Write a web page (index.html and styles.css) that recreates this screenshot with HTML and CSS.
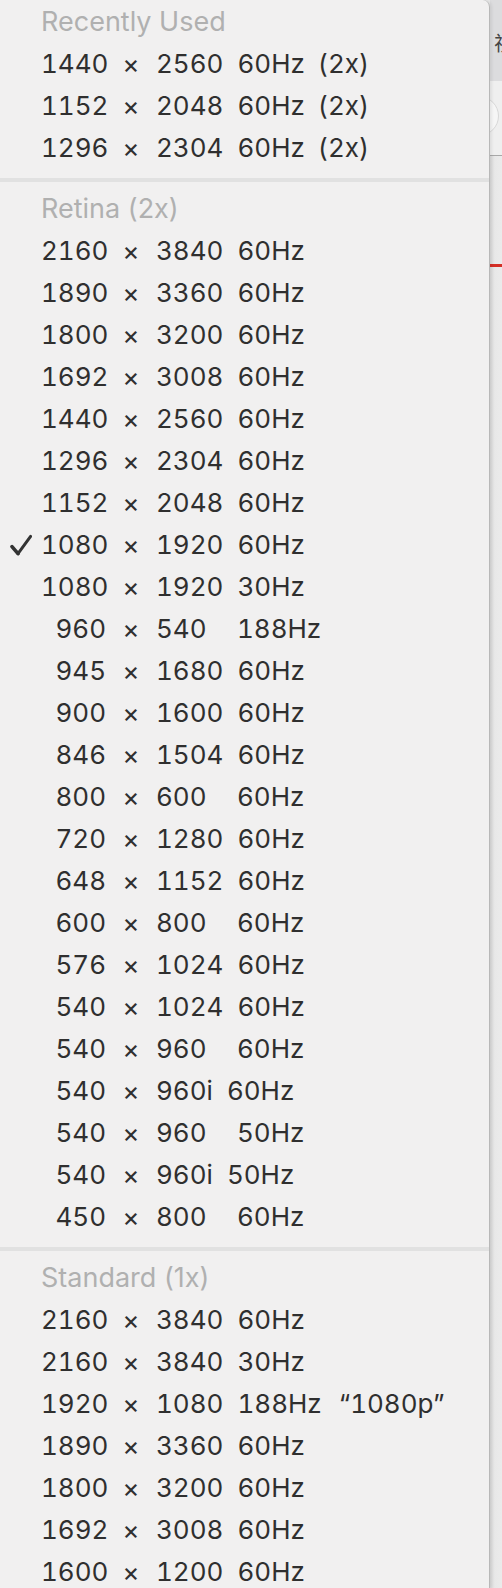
FILE: index.html
```html
<!DOCTYPE html>
<html lang="en">
<head>
<meta charset="utf-8">
<title>Display resolutions</title>
<link rel="stylesheet" href="styles.css">
</head>
<body>
<div class="screen">
  <div class="menu">
    <div class="title">Recently Used</div>
    <div class="item"><span class="mark"></span><span class="w">1440</span><span class="x">×</span><span class="h">2560</span><span class="hz">60Hz</span><span class="extra">(2x)</span></div>
    <div class="item"><span class="mark"></span><span class="w">1152</span><span class="x">×</span><span class="h">2048</span><span class="hz">60Hz</span><span class="extra">(2x)</span></div>
    <div class="item"><span class="mark"></span><span class="w">1296</span><span class="x">×</span><span class="h">2304</span><span class="hz">60Hz</span><span class="extra">(2x)</span></div>
    <div class="sep"></div>

    <div class="title">Retina (2x)</div>
    <div class="item"><span class="mark"></span><span class="w">2160</span><span class="x">×</span><span class="h">3840</span><span class="hz">60Hz</span></div>
    <div class="item"><span class="mark"></span><span class="w">1890</span><span class="x">×</span><span class="h">3360</span><span class="hz">60Hz</span></div>
    <div class="item"><span class="mark"></span><span class="w">1800</span><span class="x">×</span><span class="h">3200</span><span class="hz">60Hz</span></div>
    <div class="item"><span class="mark"></span><span class="w">1692</span><span class="x">×</span><span class="h">3008</span><span class="hz">60Hz</span></div>
    <div class="item"><span class="mark"></span><span class="w">1440</span><span class="x">×</span><span class="h">2560</span><span class="hz">60Hz</span></div>
    <div class="item"><span class="mark"></span><span class="w">1296</span><span class="x">×</span><span class="h">2304</span><span class="hz">60Hz</span></div>
    <div class="item"><span class="mark"></span><span class="w">1152</span><span class="x">×</span><span class="h">2048</span><span class="hz">60Hz</span></div>
    <div class="item"><span class="mark"><svg class="check" viewBox="0 0 22 22" width="22" height="22"><path d="M2 12.6 L8 19.6" stroke="#333" stroke-width="3.6" stroke-linecap="round" fill="none"/><path d="M8 19.6 L20.6 2.4" stroke="#333" stroke-width="3" stroke-linecap="round" fill="none"/></svg></span><span class="w">1080</span><span class="x">×</span><span class="h">1920</span><span class="hz">60Hz</span></div>
    <div class="item"><span class="mark"></span><span class="w">1080</span><span class="x">×</span><span class="h">1920</span><span class="hz">30Hz</span></div>
    <div class="item"><span class="mark"></span><span class="w">960</span><span class="x">×</span><span class="h">540<span class="fig"></span></span><span class="hz">188Hz</span></div>
    <div class="item"><span class="mark"></span><span class="w">945</span><span class="x">×</span><span class="h">1680</span><span class="hz">60Hz</span></div>
    <div class="item"><span class="mark"></span><span class="w">900</span><span class="x">×</span><span class="h">1600</span><span class="hz">60Hz</span></div>
    <div class="item"><span class="mark"></span><span class="w">846</span><span class="x">×</span><span class="h">1504</span><span class="hz">60Hz</span></div>
    <div class="item"><span class="mark"></span><span class="w">800</span><span class="x">×</span><span class="h">600<span class="fig"></span></span><span class="hz">60Hz</span></div>
    <div class="item"><span class="mark"></span><span class="w">720</span><span class="x">×</span><span class="h">1280</span><span class="hz">60Hz</span></div>
    <div class="item"><span class="mark"></span><span class="w">648</span><span class="x">×</span><span class="h">1152</span><span class="hz">60Hz</span></div>
    <div class="item"><span class="mark"></span><span class="w">600</span><span class="x">×</span><span class="h">800<span class="fig"></span></span><span class="hz">60Hz</span></div>
    <div class="item"><span class="mark"></span><span class="w">576</span><span class="x">×</span><span class="h">1024</span><span class="hz">60Hz</span></div>
    <div class="item"><span class="mark"></span><span class="w">540</span><span class="x">×</span><span class="h">1024</span><span class="hz">60Hz</span></div>
    <div class="item"><span class="mark"></span><span class="w">540</span><span class="x">×</span><span class="h">960<span class="fig"></span></span><span class="hz">60Hz</span></div>
    <div class="item"><span class="mark"></span><span class="w">540</span><span class="x">×</span><span class="h">960i</span><span class="hz">60Hz</span></div>
    <div class="item"><span class="mark"></span><span class="w">540</span><span class="x">×</span><span class="h">960<span class="fig"></span></span><span class="hz">50Hz</span></div>
    <div class="item"><span class="mark"></span><span class="w">540</span><span class="x">×</span><span class="h">960i</span><span class="hz">50Hz</span></div>
    <div class="item"><span class="mark"></span><span class="w">450</span><span class="x">×</span><span class="h">800<span class="fig"></span></span><span class="hz">60Hz</span></div>
    <div class="sep"></div>

    <div class="title">Standard (1x)</div>
    <div class="item"><span class="mark"></span><span class="w">2160</span><span class="x">×</span><span class="h">3840</span><span class="hz">60Hz</span></div>
    <div class="item"><span class="mark"></span><span class="w">2160</span><span class="x">×</span><span class="h">3840</span><span class="hz">30Hz</span></div>
    <div class="item"><span class="mark"></span><span class="w">1920</span><span class="x">×</span><span class="h">1080</span><span class="hz">188Hz</span><span class="extra quote">“1080p”</span></div>
    <div class="item"><span class="mark"></span><span class="w">1890</span><span class="x">×</span><span class="h">3360</span><span class="hz">60Hz</span></div>
    <div class="item"><span class="mark"></span><span class="w">1800</span><span class="x">×</span><span class="h">3200</span><span class="hz">60Hz</span></div>
    <div class="item"><span class="mark"></span><span class="w">1692</span><span class="x">×</span><span class="h">3008</span><span class="hz">60Hz</span></div>
    <div class="item"><span class="mark"></span><span class="w">1600</span><span class="x">×</span><span class="h">1200</span><span class="hz">60Hz</span></div>
  </div>

  <div class="backdrop">
    <div class="bd-toolbar"><span class="bd-glyph">视</span></div>
    <div class="bd-band"><span class="bd-circle"></span></div>
    <div class="bd-body"><div class="bd-red"></div></div>
  </div>
</div>
</body>
</html>
```

FILE: styles.css
```css
html, body {
  margin: 0;
  padding: 0;
}

body {
  background: #e8e8e8;
  font-family: Inter, "Noto Sans", "Liberation Sans", sans-serif;
}

.screen {
  display: flex;
  width: 502px;
  height: 1588px;
  overflow: hidden;
}

.menu {
  flex: none;
  width: 489px;
  padding-top: 2px;
  background: #f1f0f0;
  border-right: 1px solid #b8b8b8;
  border-top-right-radius: 7px;
  box-shadow: 2px 0 3px rgba(0, 0, 0, 0.07);
  position: relative;
  z-index: 1;
}

.title {
  height: 40px;
  line-height: 40px;
  padding-left: 41px;
  font-size: 27px;
  color: #b0b0b0;
  white-space: nowrap;
}

.item {
  display: flex;
  align-items: center;
  height: 42px;
  font-size: 26px;
  color: #2f2f2f;
  font-feature-settings: "tnum";
  white-space: nowrap;
}

.mark {
  flex: none;
  width: 41px;
  height: 42px;
  display: flex;
  align-items: center;
  padding-left: 10px;
  box-sizing: border-box;
}

.check {
  display: block;
  margin-top: 1px;
}

.w {
  flex: none;
  width: 65px;
  text-align: right;
}

.x {
  flex: none;
  width: 50px;
  text-align: center;
}

.h {
  flex: none;
}

.fig {
  display: inline-block;
  width: 1ch;
}

.hz {
  margin-left: 14px;
}

.extra {
  margin-left: 13px;
}

.quote {
  margin-left: 17px;
}

.sep {
  height: 21px;
  box-sizing: border-box;
  padding-top: 10px;
}

.sep::before {
  content: "";
  display: block;
  height: 4px;
  background: #e1e1e1;
}

.backdrop {
  flex: 1;
  display: flex;
  flex-direction: column;
  overflow: hidden;
}

.bd-toolbar {
  height: 81px;
  flex: none;
  background: #dcdcde;
  display: flex;
  align-items: center;
  padding-top: 4px;
  box-sizing: border-box;
}

.bd-glyph {
  font-family: "Noto Sans CJK SC", sans-serif;
  font-size: 20px;
  color: #444;
  margin-left: 4px;
  white-space: nowrap;
}

.bd-band {
  height: 74px;
  flex: none;
  background: #efefef;
  border-bottom: 1px solid #a8a8a8;
  display: flex;
  align-items: center;
}

.bd-circle {
  flex: none;
  width: 38px;
  height: 38px;
  margin-left: -31px;
  border-radius: 50%;
  background: #f6f6f6;
  border: 1px solid #d8d8d8;
  margin-top: -4px;
}

.bd-body {
  flex: 1;
  background: linear-gradient(to right, #dadada 0, #e8e8e8 5px, #ebebeb 100%);
  padding-top: 108px;
}

.bd-red {
  height: 3px;
  background: #d42f26;
}
```
